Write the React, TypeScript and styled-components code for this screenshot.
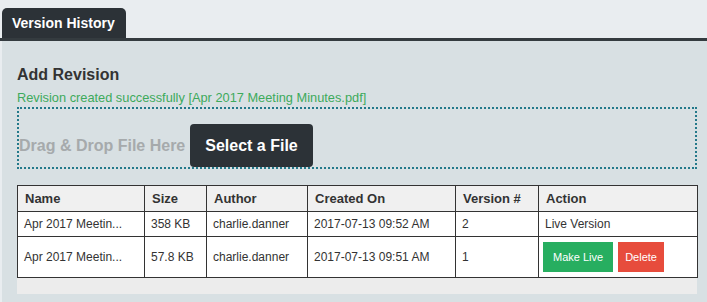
import React from "react";
import styled, { createGlobalStyle } from "styled-components";

const GlobalStyle = createGlobalStyle`
  html, body {
    margin: 0;
    padding: 0;
    background: #e9edf0;
    font-family: "Liberation Sans", Arial, sans-serif;
    color: #333;
  }
`;

type Revision = {
  name: string;
  size: string;
  author: string;
  createdOn: string;
  version: number;
  live: boolean;
};

const revisions: Revision[] = [
  {
    name: "Apr 2017 Meetin...",
    size: "358 KB",
    author: "charlie.danner",
    createdOn: "2017-07-13 09:52 AM",
    version: 2,
    live: true,
  },
  {
    name: "Apr 2017 Meetin...",
    size: "57.8 KB",
    author: "charlie.danner",
    createdOn: "2017-07-13 09:51 AM",
    version: 1,
    live: false,
  },
];

const columns = [
  { label: "Name", width: 127 },
  { label: "Size", width: 62 },
  { label: "Author", width: 101 },
  { label: "Created On", width: 148 },
  { label: "Version #", width: 83 },
  { label: "Action", width: 159 },
];

const App = () => {
  return (
    <>
      <GlobalStyle />
      <Page>
        <TabBar>
          <Tab>Version History</Tab>
        </TabBar>
        <Panel>
          <Heading>Add Revision</Heading>
          <Success>Revision created successfully [Apr 2017 Meeting Minutes.pdf]</Success>
          <DropZone>
            <DropText>Drag &amp; Drop File Here</DropText>
            <SelectButton>Select a File</SelectButton>
          </DropZone>
          <TableWrap>
            <Table>
              <colgroup>
                {columns.map((c) => (
                  <col key={c.label} style={{ width: c.width }} />
                ))}
              </colgroup>
              <thead>
                <tr>
                  {columns.map((c) => (
                    <Th key={c.label}>{c.label}</Th>
                  ))}
                </tr>
              </thead>
              <tbody>
                {revisions.map((r) => (
                  <tr key={r.version}>
                    <Td>{r.name}</Td>
                    <Td>{r.size}</Td>
                    <Td>{r.author}</Td>
                    <Td>{r.createdOn}</Td>
                    <Td>{r.version}</Td>
                    <Td $tight={!r.live}>
                      {r.live ? (
                        "Live Version"
                      ) : (
                        <Actions>
                          <ActionButton $tone="green" $pad={10}>Make Live</ActionButton>
                          <ActionButton $tone="red" $pad={7}>Delete</ActionButton>
                        </Actions>
                      )}
                    </Td>
                  </tr>
                ))}
              </tbody>
            </Table>
          </TableWrap>
        </Panel>
      </Page>
    </>
  );
};

export default App;

const Page = styled.div`
  width: 707px;
  height: 302px;
  overflow: hidden;
  display: flex;
  flex-direction: column;
`;

const TabBar = styled.div`
  display: flex;
  padding: 8px 0 0 2px;
  border-bottom: 3px solid #343b3f;
`;

const Tab = styled.div`
  height: 30px;
  padding: 0 11px 0 10px;
  display: flex;
  align-items: center;
  background: #2c3237;
  color: #fff;
  font-weight: bold;
  font-size: 14px;
  border-radius: 5px 5px 0 0;
`;

const Panel = styled.div`
  flex: 1;
  margin-left: 2px;
  background: #d8e0e3;
  padding: 25px 0 0 15px;
  display: flex;
  flex-direction: column;
`;

const Heading = styled.div`
  font-size: 16px;
  font-weight: bold;
  line-height: 18px;
  color: #333;
`;

const Success = styled.div`
  margin-top: 7px;
  font-size: 12.8px;
  line-height: 14px;
  color: #3daa5c;
`;

const DropZone = styled.div`
  width: 676px;
  margin-top: 2px;
  height: 58px;
  border: 2px dotted #23798a;
  display: flex;
  align-items: flex-end;
`;

const DropText = styled.span`
  align-self: center;
  margin-top: 15px;
  font-size: 16px;
  font-weight: bold;
  color: #a6aaac;
  margin-right: 5px;
`;

const SelectButton = styled.button`
  height: 43px;
  padding: 0 15px;
  border: none;
  border-radius: 4px;
  background: #2c3237;
  color: #fff;
  font-family: "Liberation Sans", Arial, sans-serif;
  font-size: 16px;
  font-weight: bold;
  cursor: pointer;
`;

const TableWrap = styled.div`
  width: 680px;
  margin-top: 16px;
  padding-bottom: 16px;
  background: #ececec;
`;

const Table = styled.table`
  width: 680px;
  table-layout: fixed;
  border-collapse: collapse;
  background: #fff;
`;

const Th = styled.th`
  text-align: left;
  font-size: 13px;
  line-height: 15px;
  font-weight: bold;
  padding: 5px 6px 5px 7px;
  background: #f0f0f0;
  border: 1px solid #333;
  color: #333;
`;

const Td = styled.td<{ $tight?: boolean }>`
  font-size: 12px;
  line-height: 14px;
  padding: ${(p) => (p.$tight ? "5px 4px" : "5px 6px")};
  border: 1px solid #333;
  color: #333;
  white-space: nowrap;
  overflow: hidden;
`;

const Actions = styled.div`
  display: flex;
  gap: 5px;
`;

const ActionButton = styled.button<{ $tone: "green" | "red"; $pad: number }>`
  height: 30px;
  padding: 0 ${(p) => p.$pad}px;
  border: none;
  background: ${(p) => (p.$tone === "green" ? "#27ae60" : "#e74c3c")};
  color: #fff;
  font-family: "Liberation Sans", Arial, sans-serif;
  font-size: 11px;
  cursor: pointer;
`;
